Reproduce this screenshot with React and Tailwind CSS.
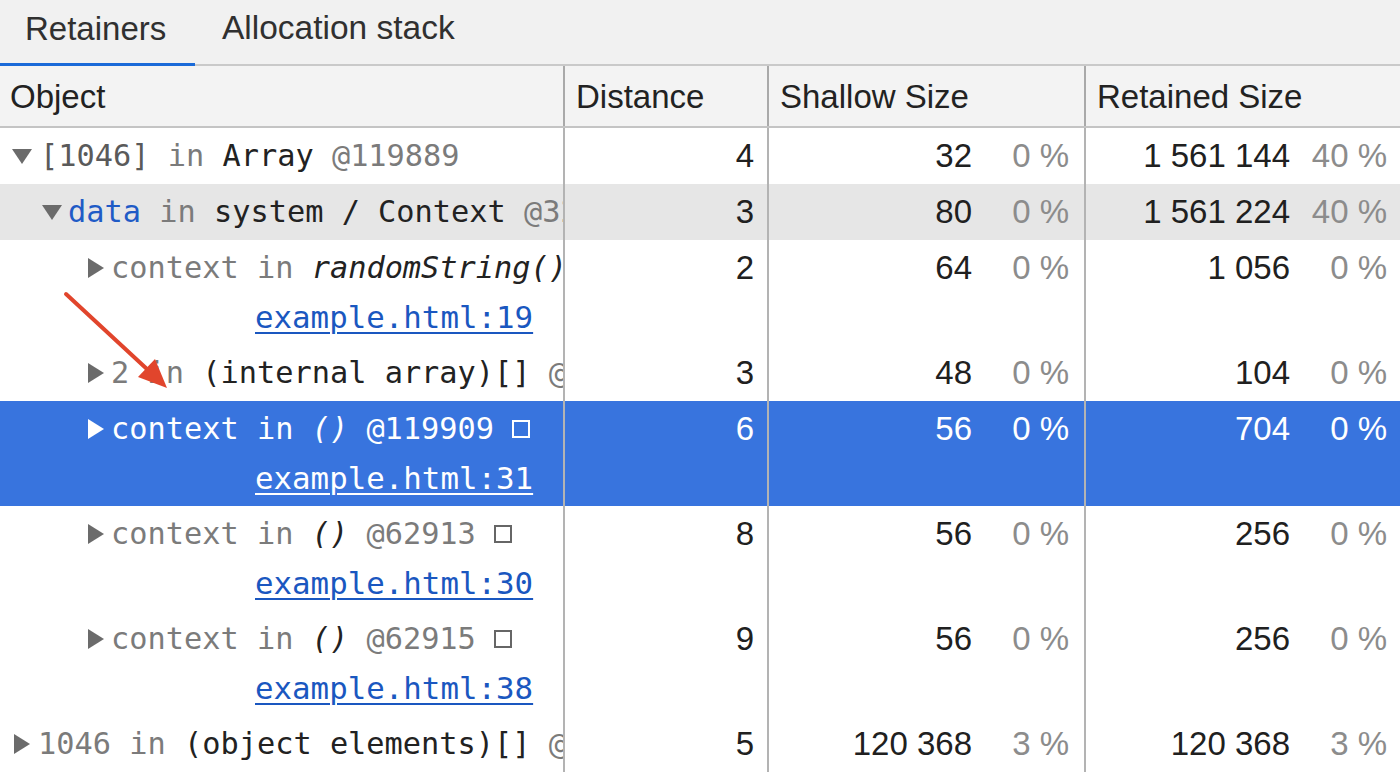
import React from 'react';

const mono = { fontFamily: '"DejaVu Sans Mono", monospace' };

function Down({ color = '#6b6b6b' }) {
  return (
    <svg width="20" height="15" viewBox="0 0 20 15" className="shrink-0">
      <polygon points="0,0 20,0 10,15" fill={color} />
    </svg>
  );
}

function Right({ color = '#6b6b6b' }) {
  return (
    <svg width="16" height="20" viewBox="0 0 16 20" className="shrink-0">
      <polygon points="0,0 16,10 0,20" fill={color} />
    </svg>
  );
}

function Box({ selected }) {
  return (
    <span
      className={`inline-block w-[18px] h-[18px] border-2 ml-[18px] align-middle ${selected ? 'border-white' : 'border-[#666]'}`}
    />
  );
}

const G = ({ children }) => <span className="text-[#7b7b7b]">{children}</span>;
const D = ({ children }) => <span className="text-[#222]">{children}</span>;

function Nums({ dist, shallow, sp, retained, rp, selected }) {
  const txt = selected ? 'text-white' : 'text-[#202020]';
  const pct = selected ? 'text-white' : 'text-[#8c8c8c]';
  return (
    <>
      <div className="w-[204px] shrink-0 border-r-2 border-[#b3b3b3]">
        <div className={`h-[56px] flex items-center justify-end pr-[13px] ${txt}`}>{dist}</div>
      </div>
      <div className="w-[317px] shrink-0 border-r-2 border-[#b3b3b3]">
        <div className="h-[56px] flex items-center pr-[15px]">
          <span className={`flex-1 text-right ${txt}`}>{shallow}</span>
          <span className={`w-[97px] text-right ${pct}`}>{sp}</span>
        </div>
      </div>
      <div className="flex-1">
        <div className="h-[56px] flex items-center pr-[13px]">
          <span className={`flex-1 text-right ${txt}`}>{retained}</span>
          <span className={`w-[97px] text-right ${pct}`}>{rp}</span>
        </div>
      </div>
    </>
  );
}

function Row({ bg = '', height = 'h-[56px]', selected, obj, link, nums }) {
  return (
    <div className={`flex ${height} ${bg}`}>
      <div className="w-[565px] shrink-0 border-r-2 border-[#b3b3b3] overflow-hidden whitespace-nowrap" style={mono}>
        <div className="h-[56px] flex items-center text-[30.3px]">{obj}</div>
        {link && (
          <div className="h-[49px] flex items-start pl-[255px] text-[30.8px] leading-[36px] pt-[3px]">
            <span className={`underline underline-offset-[4px] decoration-2 ${selected ? 'text-white' : 'text-[#1a57c0]'}`}>{link}</span>
          </div>
        )}
      </div>
      <Nums {...nums} selected={selected} />
    </div>
  );
}

export default function App() {
  return (
    <div className="relative w-[1400px] h-[777px] overflow-hidden bg-white" style={{ fontFamily: '"Liberation Sans", Arial, sans-serif' }}>
      <div className="h-[66px] bg-[#f1f1f1] border-b-2 border-[#c9c9c9] flex items-end">
        <div className="w-[195px] h-[66px] flex items-center pl-[25px] pb-[6px] text-[33px] text-[#303030] border-b-[3px] border-[#1a6ad8] -mb-[2px]">Retainers</div>
        <div className="h-[66px] flex items-center pl-[27px] pb-[6px] text-[33.5px] text-[#303030]">Allocation stack</div>
      </div>

      <div className="flex h-[62px] bg-[#f3f3f3] border-b-2 border-[#c4c4c4] text-[33px] text-[#222]">
        <div className="w-[565px] shrink-0 border-r-2 border-[#a9a9a9] flex items-center pl-[10px] pt-[2px]">Object</div>
        <div className="w-[204px] shrink-0 border-r-2 border-[#a9a9a9] flex items-center pl-[11px] pt-[2px]">Distance</div>
        <div className="w-[317px] shrink-0 border-r-2 border-[#a9a9a9] flex items-center pl-[11px] pt-[2px]">Shallow Size</div>
        <div className="flex-1 flex items-center pl-[11px] pt-[2px]">Retained Size</div>
      </div>

      <div className="text-[33px]">
        <Row
          obj={
            <div className="flex items-center pl-[12px]">
              <Down />
              <span className="ml-[8px]"><span className="text-[#5a5a5a]">[1046]</span> <G>in</G> <D>Array</D> <G>@119889</G></span>
            </div>
          }
          nums={{ dist: '4', shallow: '32', sp: '0 %', retained: '1 561 144', rp: '40 %' }}
        />
        <Row
          bg="bg-[#e6e6e6]"
          obj={
            <div className="flex items-center pl-[42px]">
              <Down />
              <span className="ml-[6px]"><span className="text-[#1f5bc6]">data</span> <G>in</G> <D>system / Context</D> <G>@3276</G></span>
            </div>
          }
          nums={{ dist: '3', shallow: '80', sp: '0 %', retained: '1 561 224', rp: '40 %' }}
        />
        <Row
          height="h-[105px]"
          obj={
            <div className="flex items-center pl-[88px]">
              <Right />
              <span className="ml-[7px]"><G>context</G> <G>in</G> <span className="italic text-[#222]">randomString()</span> <G>@119</G></span>
            </div>
          }
          link="example.html:19"
          nums={{ dist: '2', shallow: '64', sp: '0 %', retained: '1 056', rp: '0 %' }}
        />
        <Row
          obj={
            <div className="flex items-center pl-[88px]">
              <Right />
              <span className="ml-[7px]"><G>2</G> <G>in</G> <D>(internal array)[]</D> <G>@12345</G></span>
            </div>
          }
          nums={{ dist: '3', shallow: '48', sp: '0 %', retained: '104', rp: '0 %' }}
        />
        <Row
          height="h-[105px]"
          bg="bg-[#3874de]"
          selected
          obj={
            <div className="flex items-center pl-[88px] text-white">
              <Right color="#ffffff" />
              <span className="ml-[7px]">context in <span className="italic">()</span> @119909</span>
              <Box selected />
            </div>
          }
          link="example.html:31"
          nums={{ dist: '6', shallow: '56', sp: '0 %', retained: '704', rp: '0 %' }}
        />
        <Row
          height="h-[105px]"
          obj={
            <div className="flex items-center pl-[88px]">
              <Right />
              <span className="ml-[7px]"><G>context</G> <G>in</G> <span className="italic text-[#222]">()</span> <G>@62913</G></span>
              <Box />
            </div>
          }
          link="example.html:30"
          nums={{ dist: '8', shallow: '56', sp: '0 %', retained: '256', rp: '0 %' }}
        />
        <Row
          height="h-[105px]"
          obj={
            <div className="flex items-center pl-[88px]">
              <Right />
              <span className="ml-[7px]"><G>context</G> <G>in</G> <span className="italic text-[#222]">()</span> <G>@62915</G></span>
              <Box />
            </div>
          }
          link="example.html:38"
          nums={{ dist: '9', shallow: '56', sp: '0 %', retained: '256', rp: '0 %' }}
        />
        <Row
          obj={
            <div className="flex items-center pl-[14px]">
              <Right />
              <span className="ml-[8px]"><G>1046</G> <G>in</G> <D>(object elements)[]</D> <G>@1234</G></span>
            </div>
          }
          nums={{ dist: '5', shallow: '120 368', sp: '3 %', retained: '120 368', rp: '3 %' }}
        />
      </div>

      <svg className="absolute left-0 top-0 pointer-events-none" width="1400" height="777">
        <line x1="66" y1="294" x2="148" y2="370" stroke="#e1452c" strokeWidth="4" strokeLinecap="round" />
        <polygon points="167,388 138,377 155,359" fill="#e1452c" />
      </svg>
    </div>
  );
}
